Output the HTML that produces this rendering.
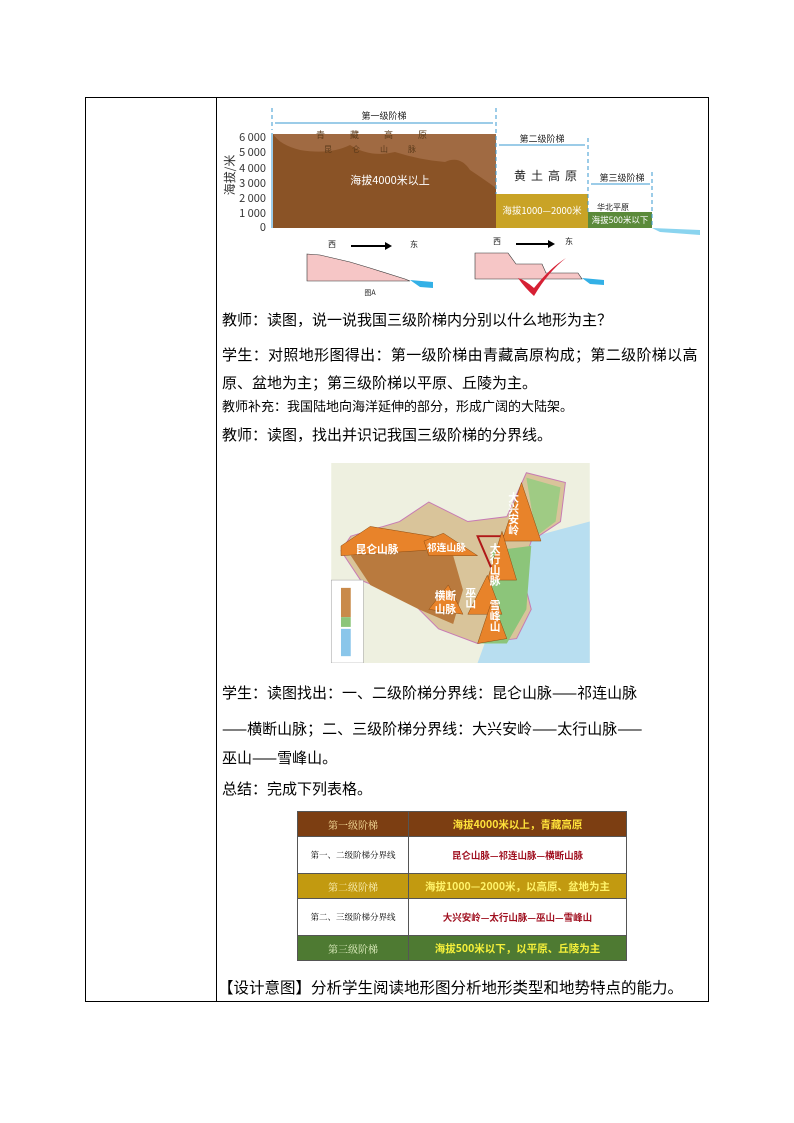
<!DOCTYPE html>
<html><head><meta charset="utf-8"><style>
body{margin:0;background:#fff;width:794px;height:1123px;position:relative;font-family:"Liberation Sans","Noto Sans CJK SC",sans-serif;overflow:hidden}
.a{position:absolute}
.t{position:absolute;left:222px;font-size:15px;color:#000;white-space:nowrap;font-family:"Noto Sans CJK SC",sans-serif}
table.s{position:absolute;left:297px;top:811px;width:330px;border-collapse:collapse;font-family:"Noto Serif CJK SC",serif}
table.s td{border:1px solid #555;text-align:center;padding:0;font-size:10px}
table.s td.r{font-family:"Noto Sans CJK SC",sans-serif;font-weight:bold;font-size:10.5px}
</style></head><body>
<div class="a" style="left:85px;top:97px;width:622px;height:903px;border:1px solid #000"></div>
<div class="a" style="left:216px;top:97px;width:1px;height:904px;background:#000"></div>

<svg class="a" style="left:220px;top:100px" width="480" height="200" viewBox="0 0 480 200" font-family="Noto Sans CJK SC,sans-serif">
<g font-size="11" fill="#333" text-anchor="end"><text x="46" y="41">6 000</text><text x="46" y="56">5 000</text><text x="46" y="72">4 000</text><text x="46" y="87">3 000</text><text x="46" y="102">2 000</text><text x="46" y="117">1 000</text><text x="46" y="131">0</text></g>
<text x="14" y="75" font-size="12" fill="#333" transform="rotate(-90 14 75)" text-anchor="middle">海拔/米</text>
<line x1="52" y1="33" x2="52" y2="128" stroke="#3a9ad0" stroke-width="1"/>
<rect x="53" y="34" width="223" height="94" fill="#8a5326"/>
<path d="M53 34 Q60 45 80 50 Q110 55 130 45 Q150 58 175 52 Q200 60 225 62 Q240 55 250 70 Q265 80 276 88 L276 34Z" fill="#a06a42"/>
<rect x="276" y="94" width="92" height="34" fill="#c9a326"/>
<rect x="368" y="112" width="64" height="16" fill="#5b8a3a"/>
<path d="M432 128 L480 130 L480 135 L440 132Z" fill="#8ad4ef"/>
<g stroke="#3a9ad0" stroke-dasharray="4 3"><line x1="52" y1="8" x2="52" y2="30"/><line x1="276" y1="8" x2="276" y2="94"/><line x1="368" y1="38" x2="368" y2="112"/><line x1="432" y1="72" x2="432" y2="125"/></g>
<g stroke="#3a9ad0"><line x1="55" y1="23" x2="273" y2="23"/><line x1="279" y1="45" x2="365" y2="45"/><line x1="371" y1="84" x2="430" y2="84"/></g>
<g font-size="9" fill="#222" text-anchor="middle"><text x="164" y="19">第一级阶梯</text><text x="322" y="42">第二级阶梯</text><text x="402" y="81">第三级阶梯</text>
<text x="170" y="84" fill="#fff" font-size="11">海拔4000米以上</text><text x="322" y="114" fill="#fff" font-size="9.5">海拔1000—2000米</text><text x="400" y="123" fill="#fff" font-size="8.5">海拔500米以下</text>
<text x="328" y="80" font-size="12" letter-spacing="5">黄土高原</text><text x="393" y="110" font-size="8">华北平原</text><text x="164" y="38" fill="#5a3a1a" letter-spacing="25">青藏高原</text><text x="160" y="52" fill="#5a3a1a" font-size="8" letter-spacing="20">昆仑山脉</text>
<text x="112" y="147" font-size="8">西</text><text x="194" y="147" font-size="8">东</text><text x="277" y="144" font-size="8">西</text><text x="349" y="144" font-size="8">东</text><text x="150" y="195" font-size="7">图A</text></g>
<path d="M131 145 L165 145 L165 142 L172 146 L165 150 L165 147 L131 147Z" fill="#000"/>
<path d="M296 143 L328 143 L328 140 L335 144 L328 148 L328 145 L296 145Z" fill="#000"/>
<path d="M87 154 L100 155 L130 162 L150 168 L185 179 L190 181 L87 181Z" fill="#f6c6c6" stroke="#333" stroke-width=".6"/>
<path d="M190 180 L213 182 L213 188 L200 187Z" fill="#33b0e6"/>
<path d="M255 153 L288 153 L296 164 L322 164 L326 173 L358 173 L362 179 L255 179Z" fill="#f6c6c6" stroke="#333" stroke-width=".6"/>
<path d="M362 178 L384 180 L384 185 L370 184Z" fill="#33b0e6"/>
<path d="M298 178 Q305 188 314 196 Q328 172 346 158 Q330 168 314 188 Q305 180 298 178Z" fill="#d62034"/>
</svg>

<div class="t" style="top:309px">教师：读图，说一说我国三级阶梯内分别以什么地形为主？</div>
<div class="t" style="top:344px;letter-spacing:0.35px">学生：对照地形图得出：第一级阶梯由青藏高原构成；第二级阶梯以高</div>
<div class="t" style="top:372px">原、盆地为主；第三级阶梯以平原、丘陵为主。</div>
<div class="t" style="top:396px;font-size:13px">教师补充：我国陆地向海洋延伸的部分，形成广阔的大陆架。</div>
<div class="t" style="top:424px">教师：读图，找出并识记我国三级阶梯的分界线。</div>

<svg class="a" style="left:330px;top:463px" width="261" height="200" viewBox="0 0 265 205" font-family="Noto Sans CJK SC,sans-serif">
<rect width="265" height="205" fill="#eef0e0"/>
<path d="M190 80 L265 60 L265 205 L150 205 L170 150 L200 120Z" fill="#b8def0"/>
<path d="M20 75 L70 60 L100 40 L140 60 L180 55 L200 10 L240 20 L235 60 L205 80 L195 110 L205 150 L190 180 L150 185 L110 170 L80 140 L30 120 L10 90Z" fill="#d9c49a" stroke="#c77ab4"/>
<path d="M20 95 L70 85 L125 95 L135 130 L125 165 L90 150 L40 125Z" fill="#b97a3e"/>
<path d="M165 90 L205 85 L200 150 L180 185 L150 185 L165 140Z" fill="#8cc57a"/>
<path d="M200 15 L235 25 L230 60 L210 75Z" fill="#9fcb84"/>
<path d="M180 75 L150 75 L165 110" fill="none" stroke="#b01818" stroke-width="2"/>
<g fill="#e8832a" stroke="#8a4a10" stroke-width=".5">
<path d="M175 80 L195 20 L215 80Z"/><path d="M10 85 L40 65 L120 78 L120 88 L10 95Z"/><path d="M95 80 L115 72 L150 95 L100 95Z"/><path d="M160 120 L175 70 L190 120Z"/><path d="M140 155 L160 115 L175 155Z"/><path d="M150 185 L165 140 L180 180Z"/><path d="M100 150 L120 125 L135 155Z"/></g>
<g fill="#fff" font-size="11" font-weight="bold"><text x="25" y="92">昆仑山脉</text><text x="98" y="90" font-size="10">祁连山脉</text><text x="187" y="30" writing-mode="tb">大兴安岭</text><text x="168" y="82" writing-mode="tb">太行山脉</text><text x="143" y="127" writing-mode="tb">巫山</text><text x="168" y="140" writing-mode="tb">雪峰山</text><text x="106" y="140">横断</text><text x="106" y="154">山脉</text></g>
<rect x="0" y="120" width="33" height="85" fill="#fff" stroke="#999" stroke-width=".5"/>
<rect x="10" y="128" width="10" height="30" fill="#c98a4a"/><rect x="10" y="158" width="10" height="10" fill="#8cc57a"/><rect x="10" y="170" width="10" height="28" fill="#8ac6ea"/>
</svg>

<div class="t" style="top:682px">学生：读图找出：一、二级阶梯分界线：昆仑山脉——祁连山脉</div>
<div class="t" style="top:718px">——横断山脉；二、三级阶梯分界线：大兴安岭——太行山脉——</div>
<div class="t" style="top:747px">巫山——雪峰山。</div>
<div class="t" style="top:778px">总结：完成下列表格。</div>

<table class="s">
<tr style="height:25px;background:#7c3e12;color:#fde5a0"><td style="width:110px">第一级阶梯</td><td class="r" style="color:#ffe23a">海拔4000米以上，青藏高原</td></tr>
<tr style="height:37px"><td style="font-size:8.5px">第一、二级阶梯分界线</td><td class="r" style="color:#a01020;font-size:9.5px">昆仑山脉—祁连山脉—横断山脉</td></tr>
<tr style="height:25px;background:#c29a10;color:#fff5c0"><td>第二级阶梯</td><td class="r" style="color:#fff36a">海拔1000—2000米，以高原、盆地为主</td></tr>
<tr style="height:37px"><td style="font-size:8.5px">第二、三级阶梯分界线</td><td class="r" style="color:#a01020;font-size:9.5px">大兴安岭—太行山脉—巫山—雪峰山</td></tr>
<tr style="height:25px;background:#4e7a32;color:#e8f5c8"><td>第三级阶梯</td><td class="r" style="color:#f5f03a">海拔500米以下，以平原、丘陵为主</td></tr>
</table>

<div class="t" style="top:976px;left:218px;font-size:15.5px">【设计意图】分析学生阅读地形图分析地形类型和地势特点的能力。</div>
</body></html>
